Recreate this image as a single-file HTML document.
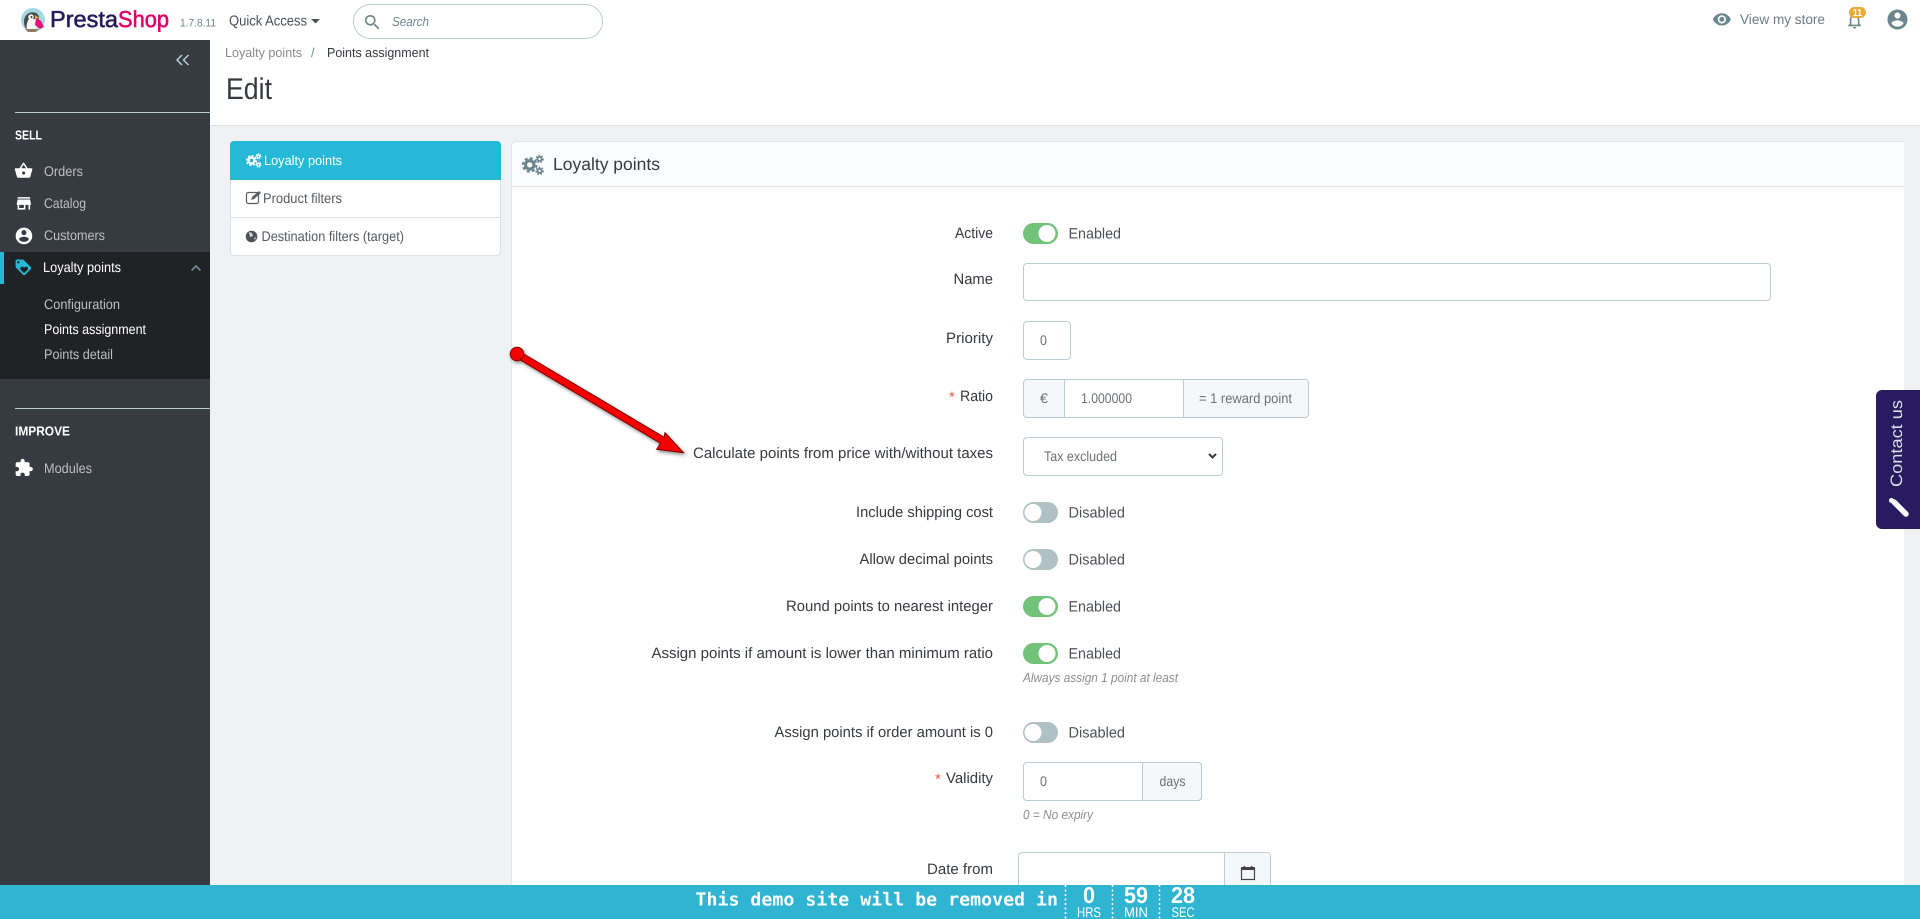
<!DOCTYPE html>
<html lang="en">
<head>
<meta charset="utf-8">
<title>Edit - PrestaShop</title>
<style>
html,body{margin:0;padding:0;background:#eff1f3;overflow:hidden;width:1920px;height:919px}
svg{display:block}
text{font-family:"Liberation Sans",sans-serif;text-rendering:geometricPrecision}
.l{font-size:15px;fill:#363a41}
.v{font-size:15px;fill:#4d5258}
.s{font-size:14px;fill:#6c7177}
.m{font-size:14px;fill:#bebfc1}
.h{font-size:13px;font-style:italic;fill:#8b8f93}
.t{font-size:14px;fill:#565b61}
</style>
</head>
<body>
<svg width="1920" height="919" viewBox="0 0 1920 919" xmlns="http://www.w3.org/2000/svg">
<defs>
<g id="gears">
<circle cx="7" cy="9" r="3.800" fill="none" stroke-width="2.800" stroke="currentColor"/>
<circle cx="7" cy="9" r="6" fill="none" stroke-width="2.200" stroke="currentColor" stroke-dasharray="2.600 2.100"/>
<circle cx="16" cy="3.600" r="1.900" fill="none" stroke-width="1.600" stroke="currentColor"/>
<circle cx="16" cy="3.600" r="3.200" fill="none" stroke-width="1.300" stroke="currentColor" stroke-dasharray="1.500 1.300"/>
<circle cx="16" cy="14.400" r="1.900" fill="none" stroke-width="1.600" stroke="currentColor"/>
<circle cx="16" cy="14.400" r="3.200" fill="none" stroke-width="1.300" stroke="currentColor" stroke-dasharray="1.500 1.300"/>
</g>
<filter id="shadow" x="-10%" y="-10%" width="120%" height="120%">
<feDropShadow dx="1.500" dy="2" stdDeviation="1.800" flood-color="#000" flood-opacity=".45"/>
</filter>
</defs>

<!-- backgrounds -->
<rect x="0" y="0" width="1920" height="919" fill="#eff1f3"/>
<rect x="0" y="0" width="1920" height="40" fill="#fff"/>
<rect x="210" y="40" width="1710" height="85" fill="#fff"/>
<rect x="210" y="125" width="1710" height="1" fill="#dfe2e5"/>

<!-- logo -->
<circle cx="33" cy="20" r="12" fill="#a3d9e3"/>
<path d="M27 30c-3-3-4-9-2-13 2-4 7-6 11-4 2 1 3 3 3 5l-2 7-1 5z" fill="#4a4d52"/>
<path d="M27 31c-1-5 0-9 2-12l7 0 1 12z" fill="#f7f5f0"/>
<circle cx="31" cy="17" r="2.800" fill="#f7f5f0"/>
<circle cx="31.500" cy="17" r="1" fill="#33363b"/>
<path d="M36 18l5 3 3 6-4 2-5-4z" fill="#e6107a"/>
<path d="M35 15l4 3-4 1z" fill="#f2a53a"/>
<path d="M25 29h14l-3 3h-8z" fill="#8f7f66"/>
<text x="50" y="27" font-size="23" font-weight="400" fill="#251b5b" stroke="#251b5b" stroke-width=".55" textLength="68" lengthAdjust="spacingAndGlyphs">Presta</text>
<text x="118" y="27" font-size="23" fill="#df0067" stroke="#df0067" stroke-width=".55" textLength="51" lengthAdjust="spacingAndGlyphs">Shop</text>
<text x="180" y="26.500" font-size="11" fill="#6c868e" textLength="36" lengthAdjust="spacingAndGlyphs">1.7.8.11</text>
<text x="229" y="25.500" font-size="14.500" fill="#4a5058" textLength="78" lengthAdjust="spacingAndGlyphs">Quick Access</text>
<path d="M311 19h9l-4.500 4.500z" fill="#4a5058"/>

<!-- search -->
<rect x="353.500" y="4.500" width="249" height="34" rx="17" fill="#fff" stroke="#bbcdd2"/>
<path transform="translate(362.500,12.500) scale(.82)" d="M15.500 14h-.79l-.28-.27C15.410 12.590 16 11.110 16 9.500 16 5.910 13.090 3 9.500 3S3 5.910 3 9.500 5.910 16 9.500 16c1.610 0 3.090-.59 4.230-1.570l.27.280v.79l5 4.990L20.490 19l-4.990-5zm-6 0C7.010 14 5 11.990 5 9.500S7.010 5 9.500 5 14 7.010 14 9.500 11.990 14 9.500 14z" fill="#6c868e"/>
<text x="392" y="26" font-size="13" font-style="italic" fill="#6c868e" textLength="37" lengthAdjust="spacingAndGlyphs">Search</text>

<!-- top right -->
<path transform="translate(1712,9.500) scale(.82)" d="M12 4.500C7 4.500 2.730 7.610 1 12c1.730 4.390 6 7.500 11 7.500s9.270-3.110 11-7.500c-1.730-4.390-6-7.500-11-7.500zM12 17c-2.760 0-5-2.240-5-5s2.240-5 5-5 5 2.240 5 5-2.240 5-5 5zm0-8c-1.660 0-3 1.340-3 3s1.340 3 3 3 3-1.340 3-3-1.340-3-3-3z" fill="#6c868e"/>
<text x="1740" y="24" font-size="14" fill="#6c7a85" textLength="85" lengthAdjust="spacingAndGlyphs">View my store</text>
<path transform="translate(1845,11) scale(.8)" d="M12 22c1.100 0 2-.9 2-2h-4c0 1.100.9 2 2 2zm6-6v-5c0-3.070-1.630-5.640-4.500-6.320V4c0-.83-.67-1.500-1.500-1.500s-1.500.67-1.500 1.500v.68C7.640 5.360 6 7.920 6 11v5l-2 2v1h16v-1l-2-2zm-2 1H8v-6c0-2.480 1.510-4.500 4-4.500s4 2.020 4 4.500v6z" fill="#6c868e"/>
<rect x="1849" y="7" width="17" height="11" rx="5.500" fill="#e8ac3b"/>
<text x="1853" y="16" font-size="10" font-weight="700" fill="#fff" textLength="9" lengthAdjust="spacingAndGlyphs">11</text>
<path transform="translate(1885.500,7.500) scale(1)" d="M12 2C6.480 2 2 6.480 2 12s4.480 10 10 10 10-4.480 10-10S17.520 2 12 2zm0 3c1.660 0 3 1.340 3 3s-1.340 3-3 3-3-1.340-3-3 1.340-3 3-3zm0 14.200c-2.500 0-4.710-1.280-6-3.220.03-1.990 4-3.080 6-3.080 1.990 0 5.970 1.090 6 3.080-1.290 1.940-3.500 3.220-6 3.220z" fill="#6c868e"/>

<!-- sidebar -->
<rect x="0" y="40" width="210" height="845" fill="#363a41"/>
<path d="M182 55l-5 5 5 5M188.500 55l-5 5 5 5" fill="none" stroke="#bbcdd2" stroke-width="1.500"/>
<rect x="15" y="112" width="195" height="1" fill="#bbcdd2"/>
<text x="15" y="139.500" font-size="13" font-weight="700" fill="#fff" textLength="27" lengthAdjust="spacingAndGlyphs">SELL</text>

<path transform="translate(14,161) scale(.8)" d="M17.210 9l-4.380-6.560c-.19-.28-.51-.42-.83-.42-.32 0-.64.140-.83.430L6.790 9H2c-.55 0-1 .45-1 1 0 .09.01.180.04.270l2.540 9.270c.23.840 1 1.460 1.920 1.460h13c.92 0 1.690-.62 1.930-1.460l2.540-9.270L23 10c0-.55-.45-1-1-1h-4.790zM9 9l3-4.400L15 9H9zm3 8c-1.100 0-2-.9-2-2s.9-2 2-2 2 .9 2 2-.9 2-2 2z" fill="#fff"/>
<text class="m" x="44" y="176" textLength="39" lengthAdjust="spacingAndGlyphs">Orders</text>
<path transform="translate(14.500,194) scale(.78)" d="M20 4H4v2h16V4zm1 10v-2l-1-5H4l-1 5v2h1v6h10v-6h4v6h2v-6h1zm-9 4H6v-4h6v4z" fill="#fff"/>
<text class="m" x="44" y="208" textLength="42" lengthAdjust="spacingAndGlyphs">Catalog</text>
<path transform="translate(14,226) scale(.83)" d="M12 2C6.480 2 2 6.480 2 12s4.480 10 10 10 10-4.480 10-10S17.520 2 12 2zm0 3c1.660 0 3 1.340 3 3s-1.340 3-3 3-3-1.340-3-3 1.340-3 3-3zm0 14.200c-2.500 0-4.710-1.280-6-3.220.03-1.990 4-3.080 6-3.080 1.990 0 5.970 1.090 6 3.080-1.290 1.940-3.500 3.220-6 3.220z" fill="#fff"/>
<text class="m" x="44" y="240" textLength="61" lengthAdjust="spacingAndGlyphs">Customers</text>

<rect x="0" y="252" width="210" height="127" fill="#202226"/>
<rect x="0" y="252" width="4" height="32" fill="#25b9d7"/>
<path transform="translate(14,258) scale(.78)" d="M21.410 11.580l-9-9C12.050 2.220 11.550 2 11 2H4c-1.100 0-2 .9-2 2v7c0 .55.22 1.050.59 1.420l9 9c.36.36.86.58 1.410.58.55 0 1.050-.22 1.410-.59l7-7c.37-.36.59-.86.59-1.410 0-.55-.23-1.060-.59-1.420zM5.500 7C4.670 7 4 6.330 4 5.500S4.670 4 5.500 4 7 4.670 7 5.500 6.330 7 5.500 7zm11.770 8.270L13 19.540l-4.270-4.270C8.280 14.810 8 14.190 8 13.500c0-1.380 1.120-2.500 2.500-2.500.69 0 1.320.28 1.770.74l.73.72.73-.73c.45-.45 1.080-.73 1.770-.73 1.380 0 2.500 1.120 2.500 2.500 0 .69-.28 1.320-.73 1.770z" fill="#25b9d7"/>
<text x="43" y="272" font-size="14" fill="#fff" textLength="78" lengthAdjust="spacingAndGlyphs">Loyalty points</text>
<path d="M191.500 270.500l4.500-4.500 4.500 4.500" fill="none" stroke="#6c868e" stroke-width="1.800"/>
<text class="m" x="44" y="309" textLength="76" lengthAdjust="spacingAndGlyphs">Configuration</text>
<text x="44" y="334" font-size="14" fill="#fff" textLength="102" lengthAdjust="spacingAndGlyphs">Points assignment</text>
<text class="m" x="44" y="359" textLength="69" lengthAdjust="spacingAndGlyphs">Points detail</text>

<rect x="15" y="408" width="195" height="1" fill="#bbcdd2"/>
<text x="15" y="435.500" font-size="13" font-weight="700" fill="#fff" textLength="55" lengthAdjust="spacingAndGlyphs">IMPROVE</text>
<path transform="translate(14,458) scale(.82)" d="M20.500 11H19V7c0-1.100-.9-2-2-2h-4V3.500C13 2.120 11.880 1 10.500 1S8 2.120 8 3.500V5H4c-1.100 0-1.990.9-1.990 2v3.800H3.500c1.490 0 2.700 1.210 2.700 2.700s-1.210 2.700-2.700 2.700H2V20c0 1.100.9 2 2 2h3.800v-1.500c0-1.490 1.210-2.700 2.700-2.700 1.490 0 2.700 1.210 2.700 2.700V22H17c1.100 0 2-.9 2-2v-4h1.500c1.380 0 2.500-1.120 2.500-2.500S21.880 11 20.500 11z" fill="#fff"/>
<text class="m" x="44" y="473" textLength="48" lengthAdjust="spacingAndGlyphs">Modules</text>

<!-- header content -->
<text x="225" y="57" font-size="13" fill="#868a8e" textLength="77" lengthAdjust="spacingAndGlyphs">Loyalty points</text>
<text x="311" y="57" font-size="13" fill="#6c868e">/</text>
<text x="327" y="57" font-size="13" fill="#363a41" textLength="102" lengthAdjust="spacingAndGlyphs">Points assignment</text>
<text x="226" y="99" font-size="30" fill="#363a41" textLength="46" lengthAdjust="spacingAndGlyphs">Edit</text>

<!-- tabs -->
<rect x="230.500" y="141.500" width="270" height="114" rx="4" fill="#fff" stroke="#dbe0e3"/>
<path d="M230 180v-35a4 4 0 0 1 4-4h263a4 4 0 0 1 4 4v35z" fill="#25b9d7"/>
<rect x="231" y="217" width="269" height="1" fill="#dbe0e3"/>
<g transform="translate(246,153.500) scale(.78)" style="color:#fff"><use href="#gears"/></g>
<text x="264" y="165" font-size="13.500" fill="#fff" textLength="78" lengthAdjust="spacingAndGlyphs">Loyalty points</text>
<rect x="246.500" y="192.500" width="12" height="11" rx="2" fill="none" stroke="#5f5a68" stroke-width="1.200"/>
<path d="M251 200l1-3 7-6 2 2-7 6z" fill="#5f5a68"/>
<text class="t" x="263" y="203" textLength="79" lengthAdjust="spacingAndGlyphs">Product filters</text>
<circle cx="251.500" cy="236.500" r="5.800" fill="#4f5359"/>
<path d="M249 232l3 1 1 3-3 1zM254 238l2-1-1 3z" fill="#d8dadc"/>
<text class="t" x="261.500" y="241" textLength="142.500" lengthAdjust="spacingAndGlyphs">Destination filters (target)</text>

<!-- panel -->
<path d="M512 885V146a4 4 0 0 1 4-4h1388v743z" fill="#fff"/>
<path d="M511.500 885V146a4.500 4.500 0 0 1 4.500-4.500h1388" fill="none" stroke="#e3e6e9"/>
<path d="M512 186V146a4 4 0 0 1 4-4h1388v44z" fill="#fafbfc"/>
<rect x="512" y="186" width="1392" height="1" fill="#dfe6e9"/>
<g transform="translate(522,155) scale(1.100)" style="color:#6c868e"><use href="#gears"/></g>
<text x="553" y="170" font-size="17.500" fill="#363a41" textLength="107" lengthAdjust="spacingAndGlyphs">Loyalty points</text>

<!-- Active -->
<text class="l" x="955" y="238" textLength="38" lengthAdjust="spacingAndGlyphs">Active</text>
<rect x="1023" y="223" width="35" height="21" rx="10.500" fill="#72c279"/>
<circle cx="1047" cy="233.500" r="8.500" fill="#fff"/>
<text class="v" x="1068.500" y="238.500" textLength="52.500" lengthAdjust="spacingAndGlyphs">Enabled</text>

<!-- Name -->
<text class="l" x="953.500" y="284" textLength="39.500" lengthAdjust="spacingAndGlyphs">Name</text>
<rect x="1023.500" y="263.500" width="747" height="37" rx="3.500" fill="#fff" stroke="#bbcdd2"/>

<!-- Priority -->
<text class="l" x="946" y="343" textLength="47" lengthAdjust="spacingAndGlyphs">Priority</text>
<rect x="1023.500" y="321.500" width="47" height="38" rx="3.500" fill="#fff" stroke="#bbcdd2"/>
<text class="s" x="1040" y="345" textLength="7" lengthAdjust="spacingAndGlyphs">0</text>

<!-- Ratio -->
<text x="949" y="402" font-size="15" fill="#f54c3e">*</text>
<text class="l" x="960" y="401" textLength="33" lengthAdjust="spacingAndGlyphs">Ratio</text>
<rect x="1023.500" y="379.500" width="285" height="38" rx="3.500" fill="#f5f8f9" stroke="#bbcdd2"/>
<rect x="1064.500" y="380" width="119" height="37" fill="#fff"/>
<path d="M1064.500 380v37M1183.500 380v37" stroke="#bbcdd2"/>
<text class="s" x="1040" y="403" textLength="8" lengthAdjust="spacingAndGlyphs">€</text>
<text class="s" x="1081" y="403" textLength="51" lengthAdjust="spacingAndGlyphs">1.000000</text>
<text class="s" x="1199" y="403" textLength="93" lengthAdjust="spacingAndGlyphs">= 1 reward point</text>

<!-- Select -->
<text class="l" x="693" y="458" textLength="300" lengthAdjust="spacingAndGlyphs">Calculate points from price with/without taxes</text>
<rect x="1023.500" y="437.500" width="199" height="38" rx="3.500" fill="#fff" stroke="#bbcdd2"/>
<text class="s" x="1044" y="461" textLength="73" lengthAdjust="spacingAndGlyphs">Tax excluded</text>
<path d="M1209 454l3.500 3.500 3.500-3.500" fill="none" stroke="#363a41" stroke-width="2"/>

<!-- Include -->
<text class="l" x="856" y="517" textLength="137" lengthAdjust="spacingAndGlyphs">Include shipping cost</text>
<rect x="1023" y="502" width="35" height="21" rx="10.500" fill="#b0c1c6"/>
<circle cx="1033" cy="512.500" r="8.500" fill="#fff"/>
<text class="v" x="1068.500" y="517.500" textLength="56.500" lengthAdjust="spacingAndGlyphs">Disabled</text>

<!-- Allow -->
<text class="l" x="859.500" y="564" textLength="133.500" lengthAdjust="spacingAndGlyphs">Allow decimal points</text>
<rect x="1023" y="549" width="35" height="21" rx="10.500" fill="#b0c1c6"/>
<circle cx="1033" cy="559.500" r="8.500" fill="#fff"/>
<text class="v" x="1068.500" y="564.500" textLength="56.500" lengthAdjust="spacingAndGlyphs">Disabled</text>

<!-- Round -->
<text class="l" x="786" y="611" textLength="207" lengthAdjust="spacingAndGlyphs">Round points to nearest integer</text>
<rect x="1023" y="596" width="35" height="21" rx="10.500" fill="#72c279"/>
<circle cx="1047" cy="606.500" r="8.500" fill="#fff"/>
<text class="v" x="1068.500" y="611.500" textLength="52.500" lengthAdjust="spacingAndGlyphs">Enabled</text>

<!-- Assign lower -->
<text class="l" x="651.500" y="658" textLength="341.500" lengthAdjust="spacingAndGlyphs">Assign points if amount is lower than minimum ratio</text>
<rect x="1023" y="643" width="35" height="21" rx="10.500" fill="#72c279"/>
<circle cx="1047" cy="653.500" r="8.500" fill="#fff"/>
<text class="v" x="1068.500" y="658.500" textLength="52.500" lengthAdjust="spacingAndGlyphs">Enabled</text>
<text class="h" x="1023" y="682" textLength="155" lengthAdjust="spacingAndGlyphs">Always assign 1 point at least</text>

<!-- Assign order -->
<text class="l" x="774.500" y="737" textLength="218.500" lengthAdjust="spacingAndGlyphs">Assign points if order amount is 0</text>
<rect x="1023" y="722" width="35" height="21" rx="10.500" fill="#b0c1c6"/>
<circle cx="1033" cy="732.500" r="8.500" fill="#fff"/>
<text class="v" x="1068.500" y="737.500" textLength="56.500" lengthAdjust="spacingAndGlyphs">Disabled</text>

<!-- Validity -->
<text x="935" y="784" font-size="15" fill="#f54c3e">*</text>
<text class="l" x="946" y="783" textLength="47" lengthAdjust="spacingAndGlyphs">Validity</text>
<rect x="1023.500" y="762.500" width="178" height="38" rx="3.500" fill="#f5f8f9" stroke="#bbcdd2"/>
<path d="M1024 763h118.500v37H1024z" fill="#fff"/>
<rect x="1023.500" y="762.500" width="178" height="38" rx="3.500" fill="none" stroke="#bbcdd2"/>
<path d="M1142.500 763v37" stroke="#bbcdd2"/>
<text class="s" x="1040" y="786" textLength="7" lengthAdjust="spacingAndGlyphs">0</text>
<text class="s" x="1159.500" y="786" textLength="26" lengthAdjust="spacingAndGlyphs">days</text>
<text class="h" x="1023" y="819" textLength="70" lengthAdjust="spacingAndGlyphs">0 = No expiry</text>

<!-- Date from -->
<text class="l" x="927" y="874" textLength="66" lengthAdjust="spacingAndGlyphs">Date from</text>
<rect x="1018.500" y="852.500" width="252" height="50" rx="3.500" fill="#fff" stroke="#bbcdd2"/>
<path d="M1224.500 853.500h44a1.500 1.500 0 0 1 1.500 1.500v48h-45.500z" fill="#f5f8f9"/>
<path d="M1224.500 853v50" stroke="#bbcdd2"/>
<rect x="1241.500" y="868.500" width="13" height="11" fill="none" stroke="#4a3f55" stroke-width="1.200"/>
<rect x="1241" y="867" width="14" height="3" fill="#4a3f55"/>
<path d="M1244.500 866v3M1251.500 866v3" stroke="#4a3f55" stroke-width="1.500"/>

<!-- arrow -->
<g filter="url(#shadow)">
<path d="M518.800 351L664 437.200 665 432.700 683.500 452.700 656.700 449.300 660.300 443.200 515.200 357z" fill="#f40000" stroke="#7a0000" stroke-width="1"/>
<circle cx="517" cy="354" r="6.800" fill="#f40000" stroke="#8a0000" stroke-width="1"/>
</g>

<!-- contact -->
<rect x="1904" y="142" width="16" height="743" fill="#eff1f3"/>
<path d="M1882 390h38v139h-38a6 6 0 0 1-6-6V396a6 6 0 0 1 6-6z" fill="#281b60"/>
<text transform="translate(1902,487) rotate(-90)" font-size="16.500" fill="#dcdbe8" textLength="87" lengthAdjust="spacingAndGlyphs">Contact us</text>
<path d="M1894 502l12 12" stroke="#fff" stroke-width="5.500" stroke-linecap="round"/>
<path d="M1889.500 503l4-4.500" stroke="#fff" stroke-width="1" opacity="0"/>
<circle cx="1891.500" cy="500.500" r="2.500" fill="#fff"/>

<!-- banner -->
<rect x="0" y="885" width="1920" height="34" fill="#2fb5d2"/>
<text x="695.500" y="905.500" font-size="18" font-weight="700" fill="#fff" style="font-family:'DejaVu Sans Mono','Liberation Mono',monospace" textLength="362.500" lengthAdjust="spacingAndGlyphs">This demo site will be removed in</text>
<path d="M1065.500 885v34M1112.500 885v34M1159.500 885v34" stroke="#fff" stroke-width="1.500" stroke-dasharray="2 2.500"/>
<text x="1083" y="903" font-size="23" font-weight="700" fill="#fff" textLength="12" lengthAdjust="spacingAndGlyphs">0</text>
<text x="1124" y="903" font-size="23" font-weight="700" fill="#fff" textLength="24" lengthAdjust="spacingAndGlyphs">59</text>
<text x="1171" y="903" font-size="23" font-weight="700" fill="#fff" textLength="24" lengthAdjust="spacingAndGlyphs">28</text>
<text x="1077" y="917" font-size="14" fill="#fff" textLength="24" lengthAdjust="spacingAndGlyphs">HRS</text>
<text x="1124" y="917" font-size="14" fill="#fff" textLength="24" lengthAdjust="spacingAndGlyphs">MIN</text>
<text x="1171.500" y="917" font-size="14" fill="#fff" textLength="23" lengthAdjust="spacingAndGlyphs">SEC</text>
</svg>
</body>
</html>
